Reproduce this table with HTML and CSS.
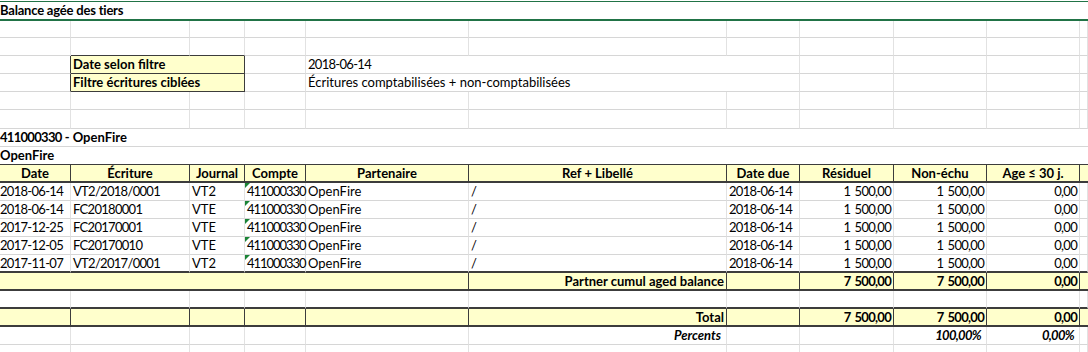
FILE: index.html
```html
<!DOCTYPE html>
<html lang="fr">
<head>
<meta charset="utf-8">
<title>Balance agée des tiers</title>
<link rel="stylesheet" href="styles.css">
</head>
<body>
<div class="sheet">
  <div class="row title"><div class="c all b ttl">Balance agée des tiers</div></div>

  <div class="row r17">
    <div class="c"></div><div class="c"></div><div class="c"></div><div class="c"></div><div class="c"></div><div class="c"></div><div class="c"></div><div class="c"></div><div class="c"></div><div class="c"></div><div class="c"></div>
  </div>
  <div class="row">
    <div class="c"></div><div class="c dk-b"></div><div class="c dk-b"></div><div class="c"></div><div class="c"></div><div class="c"></div><div class="c"></div><div class="c"></div><div class="c"></div><div class="c"></div><div class="c"></div>
  </div>
  <div class="row">
    <div class="c dk-r"></div><div class="c s2 yl dk-r dk-b b">Date selon filtre</div><div class="c"></div><div class="c s3 dg">2018-06-14</div><div class="c"></div><div class="c"></div><div class="c"></div><div class="c"></div>
  </div>
  <div class="row">
    <div class="c dk-r"></div><div class="c s2 yl dk-r dk-b b">Filtre écritures ciblées</div><div class="c"></div><div class="c s3">Écritures comptabilisées + non-comptabilisées</div><div class="c"></div><div class="c"></div><div class="c"></div><div class="c"></div>
  </div>
  <div class="row">
    <div class="c"></div><div class="c"></div><div class="c"></div><div class="c"></div><div class="c"></div><div class="c"></div><div class="c"></div><div class="c"></div><div class="c"></div><div class="c"></div><div class="c"></div>
  </div>
  <div class="row r19">
    <div class="c"></div><div class="c"></div><div class="c"></div><div class="c"></div><div class="c"></div><div class="c"></div><div class="c"></div><div class="c"></div><div class="c"></div><div class="c"></div><div class="c"></div>
  </div>

  <div class="row"><div class="c all b"><span class="dg">411000330</span> - OpenFire</div></div>
  <div class="row"><div class="c all b thick-b">OpenFire</div></div>

  <div class="row head">
    <div class="c">Date</div><div class="c">Écriture</div><div class="c">Journal</div><div class="c">Compte</div><div class="c">Partenaire</div><div class="c">Ref + Libellé</div><div class="c">Date due</div><div class="c">Résiduel</div><div class="c">Non-échu</div><div class="c">Age ≤ 30 j.</div><div class="c end"></div>
  </div>

  <div class="row data">
    <div class="c p0 dg">2018-06-14</div><div class="c dg">VT2/2018/0001</div><div class="c">VT2</div><div class="c acct">411000330</div><div class="c">OpenFire</div><div class="c">/</div><div class="c dg">2018-06-14</div><div class="c num dg">1 500,00</div><div class="c num dg">1 500,00</div><div class="c num dg">0,00</div><div class="c"></div>
  </div>
  <div class="row data">
    <div class="c p0 dg">2018-06-14</div><div class="c dg">FC20180001</div><div class="c">VTE</div><div class="c acct">411000330</div><div class="c">OpenFire</div><div class="c">/</div><div class="c dg">2018-06-14</div><div class="c num dg">1 500,00</div><div class="c num dg">1 500,00</div><div class="c num dg">0,00</div><div class="c"></div>
  </div>
  <div class="row data">
    <div class="c p0 dg">2017-12-25</div><div class="c dg">FC20170001</div><div class="c">VTE</div><div class="c acct">411000330</div><div class="c">OpenFire</div><div class="c">/</div><div class="c dg">2018-06-14</div><div class="c num dg">1 500,00</div><div class="c num dg">1 500,00</div><div class="c num dg">0,00</div><div class="c"></div>
  </div>
  <div class="row data">
    <div class="c p0 dg">2017-12-05</div><div class="c dg">FC20170010</div><div class="c">VTE</div><div class="c acct">411000330</div><div class="c">OpenFire</div><div class="c">/</div><div class="c dg">2018-06-14</div><div class="c num dg">1 500,00</div><div class="c num dg">1 500,00</div><div class="c num dg">0,00</div><div class="c"></div>
  </div>
  <div class="row data last">
    <div class="c p0 dg">2017-11-07</div><div class="c dg">VT2/2017/0001</div><div class="c">VT2</div><div class="c acct">411000330</div><div class="c">OpenFire</div><div class="c">/</div><div class="c dg">2018-06-14</div><div class="c num dg">1 500,00</div><div class="c num dg">1 500,00</div><div class="c num dg">0,00</div><div class="c"></div>
  </div>

  <div class="row sum">
    <div class="c s5"></div><div class="c num">Partner cumul aged balance</div><div class="c"></div><div class="c num dg">7 500,00</div><div class="c num dg">7 500,00</div><div class="c num dg">0,00</div><div class="c end"></div>
  </div>

  <div class="row pre-total">
    <div class="c"></div><div class="c"></div><div class="c"></div><div class="c"></div><div class="c"></div><div class="c"></div><div class="c"></div><div class="c"></div><div class="c"></div><div class="c"></div><div class="c"></div>
  </div>

  <div class="row sum">
    <div class="c"></div><div class="c"></div><div class="c"></div><div class="c"></div><div class="c"></div><div class="c num">Total</div><div class="c"></div><div class="c num dg">7 500,00</div><div class="c num dg">7 500,00</div><div class="c num dg">0,00</div><div class="c end"></div>
  </div>

  <div class="row pct">
    <div class="c"></div><div class="c"></div><div class="c"></div><div class="c"></div><div class="c"></div><div class="c num">Percents</div><div class="c"></div><div class="c"></div><div class="c num dg">100,00%</div><div class="c num dg">0,00%</div><div class="c"></div>
  </div>

  <div class="row">
    <div class="c"></div><div class="c"></div><div class="c"></div><div class="c"></div><div class="c"></div><div class="c"></div><div class="c"></div><div class="c"></div><div class="c"></div><div class="c"></div><div class="c"></div>
  </div>
</div>
</body>
</html>
```

FILE: styles.css
```css
* {
  box-sizing: border-box;
  margin: 0;
  padding: 0;
}

body {
  margin: 0;
  background: #ffffff;
  font-family: Lato, "Liberation Sans", sans-serif;
  font-size: 13px;
  color: #000000;
}

.sheet {
  width: 1088px;
  padding-top: 1px;
  overflow: hidden;
}

.row {
  display: grid;
  grid-template-columns: 71px 119px 55px 61px 163px 258px 73px 94px 93px 93px 8px;
  height: 18px;
}

.row.r17 { height: 17px; }
.row.r19 { height: 19px; }

.c {
  position: relative;
  border-right: 1px solid #e2e2e2;
  border-bottom: 1px solid #d6d6d6;
  padding: 0 2px;
  line-height: 17px;
  white-space: nowrap;
  overflow: visible;
}

.b { font-weight: 700; }

.dg {
  letter-spacing: -0.7px;
  word-spacing: 1.5px;
}

.all {
  grid-column: 1 / -1;
  border-right: none;
  padding-left: 0;
}

.title {
  height: 20px;
  border-top: 1px solid #217346;
  border-bottom: 2px solid #217346;
}

.title .c {
  border-bottom: none;
  line-height: 17px;
}

.ttl { letter-spacing: -0.2px; }

.s2 { grid-column: span 2; }
.s3 { grid-column: span 3; }
.s5 { grid-column: span 5; }

.yl { background: #ffffcc; }

.dk-r { border-right-color: #3c3c3c; }
.dk-b { border-bottom-color: #3c3c3c; }

.thick-b { border-bottom: 2px solid #3c3c3c; }

/* header row */
.head .c {
  background: #ffffcc;
  font-weight: 700;
  text-align: center;
  border-right-color: #3c3c3c;
  border-bottom: 2px solid #3c3c3c;
  line-height: 16px;
}

.head .c.end { border-right: none; }

/* data rows */
.p0 { padding-left: 0; }

.num { text-align: right; }

.num.dg { padding-right: 2px; }

.data.last .c { border-bottom: 2px solid #3c3c3c; line-height: 16px; }

.acct {
  padding-left: 2px;
  letter-spacing: -1.05px;
}

.acct::before {
  content: "";
  position: absolute;
  left: 0;
  top: 0;
  width: 0;
  height: 0;
  border-top: 5px solid #1a8436;
  border-right: 5px solid transparent;
}

/* sum rows */
.sum .c {
  background: #ffffcc;
  font-weight: 700;
  border-right-color: #3c3c3c;
  border-bottom: 2px solid #3c3c3c;
  line-height: 16px;
}

.sum .c.end { border-right: none; }

.pre-total .c {
  border-bottom: 2px solid #3c3c3c;
  line-height: 16px;
}

.pct .c.num {
  font-weight: 700;
  font-style: italic;
  padding-right: 5px;
}
```
